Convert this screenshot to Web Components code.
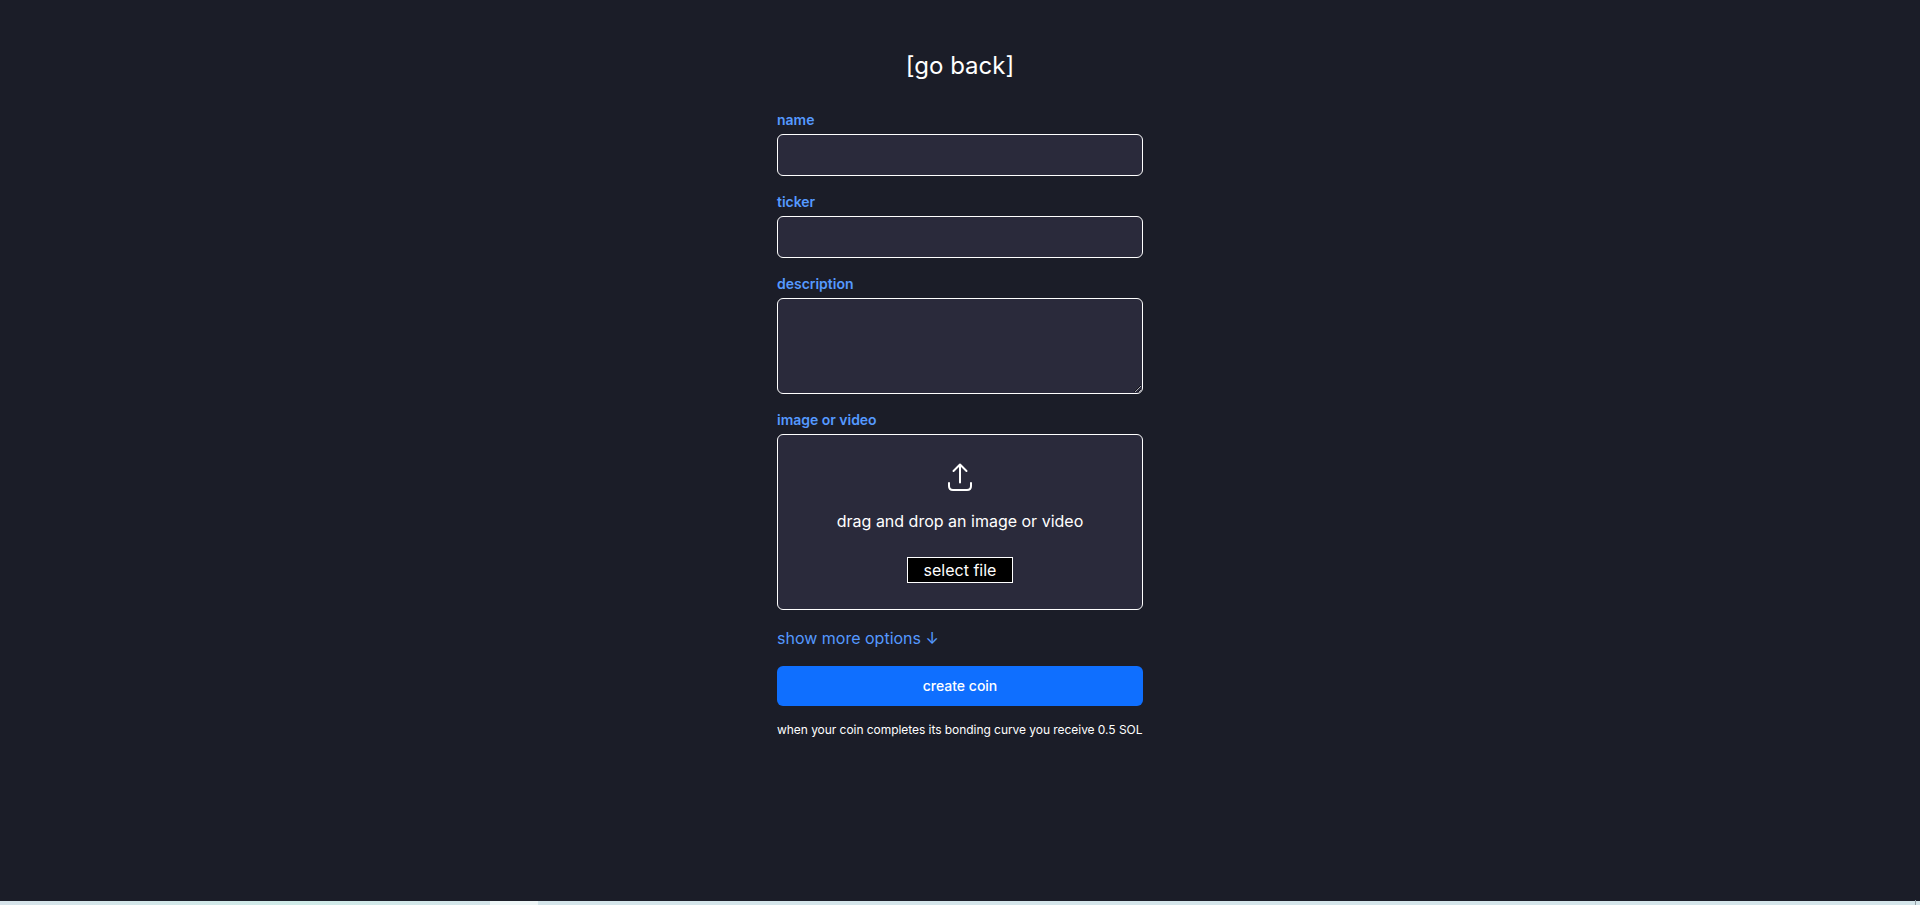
<!doctype html>
<html>
<head>
<meta charset="utf-8">
<title>create coin</title>
<style>
html, body { margin:0; height:100%; background:#1b1d28; }
body { font-family:Inter, "Liberation Sans", sans-serif; color:#fff; overflow:hidden; }
</style>
</head>
<body>
<coin-page>
    <back-link slot="head">[go back]</back-link>
    <form-field label="name"></form-field>
    <form-field label="ticker"></form-field>
    <form-field label="description" type="textarea"></form-field>
    <form-field label="image or video" type="file"></form-field>
    <more-options>show more options ↓</more-options>
    <create-button>create coin</create-button>
    <small-note>when your coin completes its bonding curve you receive 0.5 SOL</small-note>
</coin-page>
<script>
class CoinPage extends HTMLElement {
    constructor() {
        super();
        this.attachShadow({mode:'open'}).innerHTML = `
        <style>
        :host { display:flex; flex-direction:column; height:100vh; box-sizing:border-box; }
        main { flex:1; display:flex; flex-direction:column; align-items:center; padding-top:50px; }
        .form { width:366px; display:flex; flex-direction:column; gap:16px; margin-top:28px; }
        .strip { height:4px; background:linear-gradient(90deg,#d6e3ea 0,#cfebe8 300px,#d4e5ea 490px,#d4e5ea 100%); position:relative; }
        .strip::before { content:''; position:absolute; left:490px; width:48px; top:0; bottom:0; background:#eef6f7; }
        .strip::after { content:''; position:absolute; left:1915px; width:1px; top:-1px; bottom:0; background:#8f9ba3; }
        </style>
        <main>
            <slot name="head"></slot>
            <div class="form"><slot></slot></div>
        </main>
        <div class="strip"></div>`;
    }
}
class BackLink extends HTMLElement {
    constructor() {
        super();
        this.attachShadow({mode:'open'}).innerHTML = `
        <style>:host { display:block; font-size:24px; line-height:32px; color:#fff; font-weight:420; }</style>
        <slot></slot>`;
    }
}
class FormField extends HTMLElement {
    constructor() {
        super();
        const type = this.getAttribute('type');
        let control = '<input type="text">';
        if (type === 'textarea') control = '<textarea></textarea>';
        if (type === 'file') control = '<drop-zone></drop-zone>';
        this.attachShadow({mode:'open'}).innerHTML = `
        <style>
        :host { display:flex; flex-direction:column; gap:4px; }
        label { font-size:14px; line-height:20px; font-weight:600; color:#5599ff; letter-spacing:-.02px; }
        input, textarea { display:block; box-sizing:border-box; width:100%; margin:0; padding:8px; height:42px;
            background:#2a2a3b; color:#fff; border:1px solid #fff; border-radius:6px; outline:0; font:16px Inter, sans-serif; }
        textarea { height:96px; resize:vertical; }
        </style>
        <label>${this.getAttribute('label')}</label>
        ${control}`;
    }
}
class DropZone extends HTMLElement {
    constructor() {
        super();
        this.attachShadow({mode:'open'}).innerHTML = `
        <style>
        :host { display:flex; flex-direction:column; align-items:center; box-sizing:border-box; height:176px; padding:26px 0;
            background:#2a2a3b; border:1px solid #fff; border-radius:6px; }
        svg { display:block; width:32px; height:32px; }
        p { margin:16px 0 24px; font-size:16px; line-height:24px; color:#fff; }
        button { box-sizing:border-box; width:106px; height:26px; padding:0; background:#000; color:#fff; border:1px solid #fff;
            font:16px/24px Inter, sans-serif; }
        </style>
        <svg viewBox="0 0 32 32" fill="none" stroke="#fff" stroke-width="2" stroke-linecap="round" stroke-linejoin="round">
            <path d="M16 4V21.500M9.500 10 16 3.500 22.500 10"/>
            <path d="M5 22V25C5 27.500 6.500 29 9 29H23C25.500 29 27 27.500 27 25V22"/>
        </svg>
        <p>drag and drop an image or video</p>
        <button type="button">select file</button>`;
    }
}
class MoreOptions extends HTMLElement {
    constructor() {
        super();
        this.attachShadow({mode:'open'}).innerHTML = `
        <style>:host { display:block; font-size:16px; line-height:24px; color:#5599ff; }</style>
        <slot></slot>`;
    }
}
class CreateButton extends HTMLElement {
    constructor() {
        super();
        this.attachShadow({mode:'open'}).innerHTML = `
        <style>
        :host { display:flex; align-items:center; justify-content:center; box-sizing:border-box; height:40px; padding-bottom:1px;
            border-radius:6px; background:#0f6fff; color:#fff; font-size:14px; font-weight:500; }
        </style>
        <slot></slot>`;
    }
}
class SmallNote extends HTMLElement {
    constructor() {
        super();
        this.attachShadow({mode:'open'}).innerHTML = `
        <style>:host { display:block; font-size:12px; line-height:16px; color:#fff; white-space:nowrap; letter-spacing:-.05px; }</style>
        <slot></slot>`;
    }
}
customElements.define('coin-page', CoinPage);
customElements.define('back-link', BackLink);
customElements.define('form-field', FormField);
customElements.define('drop-zone', DropZone);
customElements.define('more-options', MoreOptions);
customElements.define('create-button', CreateButton);
customElements.define('small-note', SmallNote);
</script>
</body>
</html>
